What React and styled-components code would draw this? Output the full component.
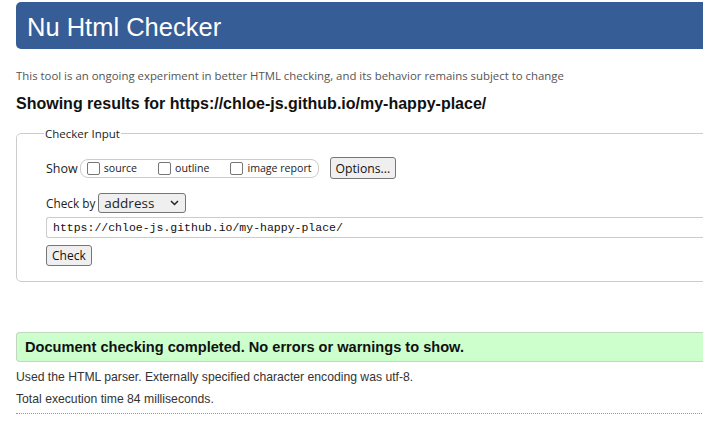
import React from "react";
import styled, { createGlobalStyle } from "styled-components";

const GlobalStyle = createGlobalStyle`
  html, body {
    margin: 0;
    padding: 0;
    background: #fff;
    overflow: hidden;
  }
  body {
    font-family: "Liberation Sans", Arial, sans-serif;
    color: #222;
  }
`;

const Page = styled.div`
  width: 760px;
  padding: 2px 0 0 16px;
`;

const Header = styled.h1`
  margin: 0;
  height: 47px;
  box-sizing: border-box;
  display: flex;
  align-items: center;
  padding: 3px 0 0 11px;
  background: #365d95;
  color: #fff;
  border-radius: 5px 0 0 5px;
  font-family: "Liberation Sans", Arial, sans-serif;
  font-weight: normal;
  font-size: 25.5px;
`;

const Intro = styled.p`
  margin: 19px 0 0;
  font-family: "Open Sans", "Noto Sans", sans-serif;
  font-size: 11.4px;
  color: #555;
`;

const Results = styled.h2`
  margin: 12px 0 0;
  font-size: 16px;
  font-weight: bold;
  color: #111;
`;

const Fieldset = styled.fieldset`
  margin: 13px 0 0;
  padding: 6px 0 15px 29px;
  border: 1px solid #ccc;
  border-radius: 5px 0 0 5px;
  font-family: "Open Sans", "Noto Sans", sans-serif;
  font-size: 12px;
  color: #222;
  height: 156px;
  box-sizing: border-box;
  min-width: 0;
`;

const Legend = styled.legend`
  padding: 0 1px;
  margin-left: -2px;
  font-size: 11.5px;
`;

const Row = styled.div`
  display: flex;
  align-items: center;
  margin-top: ${(p) => p.top}px;
`;

const Label = styled.span`
  margin-right: 2px;
  font-size: ${(p) => p.size || 12}px;
`;

const Pill = styled.div`
  display: flex;
  align-items: center;
  height: 17px;
  padding: 0 6px;
  border: 1px solid #ccc;
  border-radius: 8px;
  gap: 21px;
  font-size: 10.6px;
`;

const Option = styled.label`
  display: flex;
  align-items: center;
  gap: 4px;
`;

const Box = styled.span`
  width: 11px;
  height: 11px;
  border: 1px solid #767676;
  border-radius: 2px;
  background: #fff;
`;

const Button = styled.button`
  font-family: "Open Sans", "Noto Sans", sans-serif;
  font-size: ${(p) => p.size || 12.2}px;
  color: #111;
  background: #efefef;
  border: 1px solid #767676;
  border-radius: 3px;
  height: ${(p) => p.h || 21}px;
  padding: 0 5px;
  margin-left: ${(p) => p.ml || 0}px;
`;

const Select = styled.div`
  display: flex;
  align-items: center;
  justify-content: space-between;
  width: 88px;
  height: 20px;
  box-sizing: border-box;
  padding: 0 6px 0 5px;
  background: #efefef;
  border: 1px solid #767676;
  border-radius: 3px;
  font-size: 13.5px;
  margin-left: 1px;
`;

const UrlInput = styled.div`
  margin-top: 4px;
  height: 21px;
  box-sizing: border-box;
  display: flex;
  align-items: center;
  padding-left: 6px;
  border: 1px solid #ccc;
  border-right: none;
  border-radius: 3px 0 0 3px;
  font-family: "Liberation Mono", "DejaVu Sans Mono", monospace;
  font-size: 11.5px;
  color: #111;
`;

const Success = styled.div`
  margin-top: 50px;
  height: 30px;
  box-sizing: border-box;
  display: flex;
  align-items: center;
  padding-left: 8px;
  background: #ccffcc;
  border: 1px solid #c0d8c0;
  border-right: none;
  border-radius: 4px 0 0 4px;
  font-weight: bold;
  font-size: 14.6px;
  color: #111;
`;

const Detail = styled.p`
  margin: ${(p) => p.top}px 0 0;
  font-size: 12.2px;
  color: #333;
`;

const Rule = styled.hr`
  margin: 7px 0 0;
  border: none;
  border-top: 1px dotted #999;
`;

const Chevron = () => (
  <svg width="9" height="6" viewBox="0 0 9 6">
    <path d="M1 1l3.5 3.5L8 1" fill="none" stroke="#222" strokeWidth="1.5" />
  </svg>
);

export default function App() {
  return (
    <>
      <GlobalStyle />
      <Page>
        <Header>Nu Html Checker</Header>
        <Intro>
          This tool is an ongoing experiment in better HTML checking, and its
          behavior remains subject to change
        </Intro>
        <Results>Showing results for https://chloe-js.github.io/my-happy-place/</Results>
        <Fieldset>
          <Legend>Checker Input</Legend>
          <Row top={10}>
            <Label size={12.5}>Show</Label>
            <Pill>
              <Option>
                <Box />
                source
              </Option>
              <Option>
                <Box />
                outline
              </Option>
              <Option>
                <Box />
                image report
              </Option>
            </Pill>
            <Button ml={11} h={22}>Options...</Button>
          </Row>
          <Row top={14}>
            <Label size={11.8}>Check by</Label>
            <Select>
              address
              <Chevron />
            </Select>
          </Row>
          <UrlInput>https://chloe-js.github.io/my-happy-place/</UrlInput>
          <Row top={7}>
            <Button h={21} size={12}>Check</Button>
          </Row>
        </Fieldset>
        <Success>Document checking completed. No errors or warnings to show.</Success>
        <Detail top={8}>Used the HTML parser. Externally specified character encoding was utf-8.</Detail>
        <Detail top={8}>Total execution time 84 milliseconds.</Detail>
        <Rule />
      </Page>
    </>
  );
}
